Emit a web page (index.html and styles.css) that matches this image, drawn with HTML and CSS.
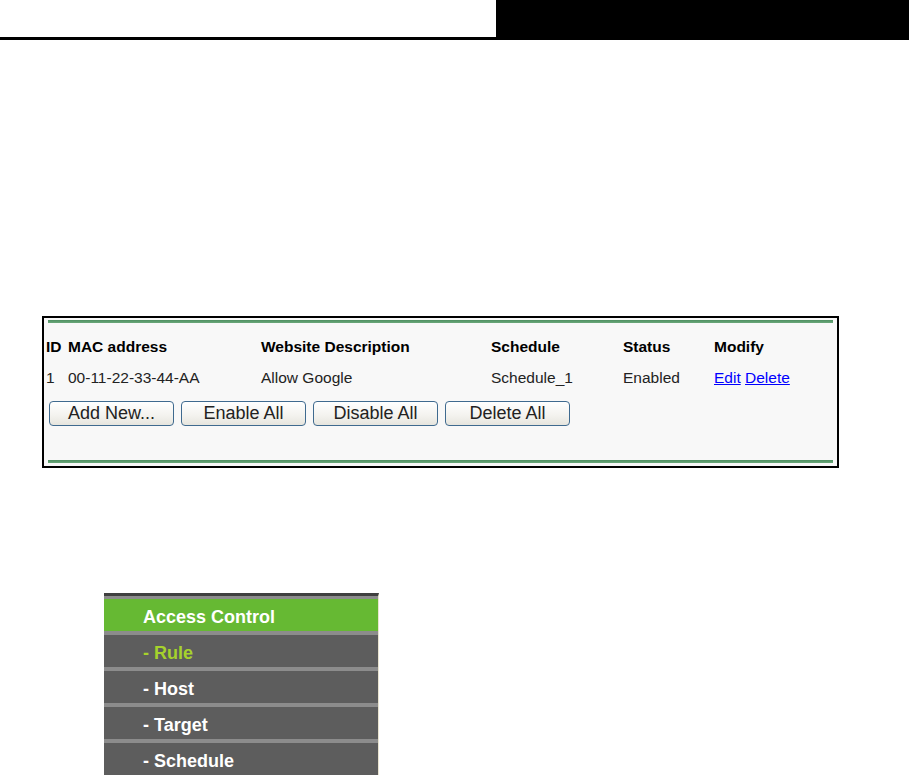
FILE: index.html
```html
<!DOCTYPE html>
<html lang="en">
<head>
    <meta charset="UTF-8">
    <title>Access Control - Rule</title>
    <link rel="stylesheet" href="styles.css">
</head>
<body>
    <div class="topbar">
        <div class="topbar-block"></div>
    </div>

    <div class="panel">
        <div class="green-line"></div>
        <table class="rules">
            <thead>
                <tr>
                    <th class="c-id">ID</th>
                    <th class="c-mac">MAC address</th>
                    <th class="c-site">Website Description</th>
                    <th class="c-sched">Schedule</th>
                    <th class="c-status">Status</th>
                    <th>Modify</th>
                </tr>
            </thead>
            <tbody>
                <tr>
                    <td>1</td>
                    <td>00-11-22-33-44-AA</td>
                    <td>Allow Google</td>
                    <td>Schedule_1</td>
                    <td>Enabled</td>
                    <td><a href="#">Edit</a> <a href="#">Delete</a></td>
                </tr>
            </tbody>
        </table>
        <div class="buttons">
            <button class="button">Add New...</button>
            <button class="button">Enable All</button>
            <button class="button">Disable All</button>
            <button class="button">Delete All</button>
        </div>
        <div class="green-line bottom"></div>
    </div>

    <div class="menu">
        <div class="menu-item head">Access Control</div>
        <div class="menu-item active">- Rule</div>
        <div class="menu-item">- Host</div>
        <div class="menu-item">- Target</div>
        <div class="menu-item">- Schedule</div>
    </div>
</body>
</html>
```

FILE: styles.css
```css
body {
    margin: 0;
    font-family: 'Liberation Sans', Arial, sans-serif;
    background-color: white;
    color: black;
    overflow: hidden;
}
.topbar {
    display: flex;
    height: 37px;
    border-bottom: 3px solid #000;
}
.topbar-block {
    margin-left: auto;
    width: 413px;
    background-color: #000;
}
.panel {
    margin: 276px 0 0 42px;
    width: 789px;
    border: 2px solid #000;
    background-color: #f8f8f8;
    padding: 0 2px;
}
.green-line {
    height: 3px;
    margin: 2px 2px 0;
    background: linear-gradient(#4f8f62, #6aa87a);
}
.green-line.bottom {
    margin: 34px 2px 3px;
}
.rules {
    margin-top: 8px;
    border-collapse: collapse;
    font-size: 15.5px;
    color: #222;
}
.rules th, .rules td {
    padding: 0;
    height: 31px;
    text-align: left;
    vertical-align: middle;
    white-space: nowrap;
}
.rules th {
    font-weight: bold;
    color: #000;
}
.c-id { width: 22px; }
.c-mac { width: 193px; }
.c-site { width: 230px; }
.c-sched { width: 132px; }
.c-status { width: 91px; }
.rules a {
    color: #0000ff;
    text-decoration: underline;
}
.buttons {
    display: flex;
    gap: 7px;
    margin: 8px 0 0 3px;
}
.button {
    width: 125px;
    height: 25px;
    padding: 0;
    font-family: 'Liberation Sans', Arial, sans-serif;
    font-size: 18px;
    color: #222;
    background: linear-gradient(#ffffff, #f3f2ee 60%, #e6e5de);
    border: 1px solid #3f6a8f;
    border-radius: 4px;
}
.menu {
    margin: 125px 0 0 104px;
    width: 274px;
    border-top: 3px solid #3f3f3f;
    border-right: 1px solid #e9e4d0;
    background-color: #8c8c8c;
    padding-top: 3px;
}
.menu-item {
    height: 32px;
    box-sizing: border-box;
    padding: 4px 0 0 39px;
    display: flex;
    align-items: center;
    background-color: #5d5d5d;
    color: white;
    font-size: 18px;
    font-weight: bold;
    margin-bottom: 4px;
}
.menu-item.head {
    background-color: #66b933;
}
.menu-item.active {
    color: #a6d22c;
}
```
